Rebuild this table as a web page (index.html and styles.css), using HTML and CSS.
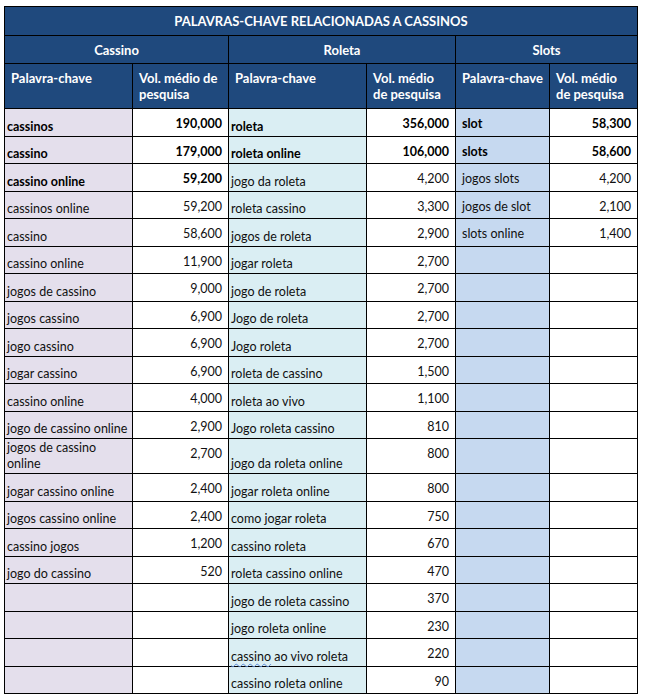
FILE: index.html
```html
<!DOCTYPE html>
<html lang="pt">
<head>
<meta charset="utf-8">
<title>Palavras-chave relacionadas a cassinos</title>
<link rel="stylesheet" href="styles.css">
</head>
<body>
<div class="wrap">
<table class="sheet">
<colgroup>
<col class="c1"><col class="c2"><col class="c3"><col class="c4"><col class="c5"><col class="c6">
</colgroup>
<thead>
<tr class="r-title"><th colspan="6">PALAVRAS-CHAVE RELACIONADAS A CASSINOS</th></tr>
<tr class="r-group"><th colspan="2">Cassino</th><th colspan="2">Roleta</th><th colspan="2">Slots</th></tr>
<tr class="r-sub">
<th>Palavra-chave</th><th>Vol. médio de pesquisa</th>
<th>Palavra-chave</th><th>Vol. médio de pesquisa</th>
<th>Palavra-chave</th><th>Vol. médio de pesquisa</th>
</tr>
</thead>
<tbody>
<tr><td class="kc b">cassinos</td><td class="num b">190,000</td><td class="kr b">roleta</td><td class="num b">356,000</td><td class="ks b">slot</td><td class="num b">58,300</td></tr>
<tr><td class="kc b">cassino</td><td class="num b">179,000</td><td class="kr b">roleta online</td><td class="num b">106,000</td><td class="ks b">slots</td><td class="num b">58,600</td></tr>
<tr><td class="kc b">cassino online</td><td class="num b">59,200</td><td class="kr">jogo da roleta</td><td class="num">4,200</td><td class="ks">jogos slots</td><td class="num">4,200</td></tr>
<tr><td class="kc">cassinos online</td><td class="num">59,200</td><td class="kr">roleta cassino</td><td class="num">3,300</td><td class="ks">jogos de slot</td><td class="num">2,100</td></tr>
<tr><td class="kc">cassino</td><td class="num">58,600</td><td class="kr">jogos de roleta</td><td class="num">2,900</td><td class="ks">slots online</td><td class="num">1,400</td></tr>
<tr><td class="kc">cassino online</td><td class="num">11,900</td><td class="kr">jogar roleta</td><td class="num">2,700</td><td class="ks"></td><td class="num"></td></tr>
<tr><td class="kc">jogos de cassino</td><td class="num">9,000</td><td class="kr">jogo de roleta</td><td class="num">2,700</td><td class="ks"></td><td class="num"></td></tr>
<tr><td class="kc">jogos cassino</td><td class="num">6,900</td><td class="kr">Jogo de roleta</td><td class="num">2,700</td><td class="ks"></td><td class="num"></td></tr>
<tr><td class="kc">jogo cassino</td><td class="num">6,900</td><td class="kr">Jogo roleta</td><td class="num">2,700</td><td class="ks"></td><td class="num"></td></tr>
<tr><td class="kc">jogar cassino</td><td class="num">6,900</td><td class="kr">roleta de cassino</td><td class="num">1,500</td><td class="ks"></td><td class="num"></td></tr>
<tr><td class="kc">cassino online</td><td class="num">4,000</td><td class="kr">roleta ao vivo</td><td class="num">1,100</td><td class="ks"></td><td class="num"></td></tr>
<tr><td class="kc nowrap">jogo de cassino online</td><td class="num">2,900</td><td class="kr">Jogo roleta cassino</td><td class="num">810</td><td class="ks"></td><td class="num"></td></tr>
<tr class="tall"><td class="kc">jogos de cassino online</td><td class="num">2,700</td><td class="kr">jogo da roleta online</td><td class="num">800</td><td class="ks"></td><td class="num"></td></tr>
<tr><td class="kc">jogar cassino online</td><td class="num">2,400</td><td class="kr">jogar roleta online</td><td class="num">800</td><td class="ks"></td><td class="num"></td></tr>
<tr><td class="kc">jogos cassino online</td><td class="num">2,400</td><td class="kr">como jogar roleta</td><td class="num">750</td><td class="ks"></td><td class="num"></td></tr>
<tr><td class="kc">cassino jogos</td><td class="num">1,200</td><td class="kr">cassino roleta</td><td class="num">670</td><td class="ks"></td><td class="num"></td></tr>
<tr><td class="kc">jogo do cassino</td><td class="num">520</td><td class="kr">roleta cassino online</td><td class="num">470</td><td class="ks"></td><td class="num"></td></tr>
<tr><td class="kc"></td><td class="num"></td><td class="kr">jogo de roleta cassino</td><td class="num">370</td><td class="ks"></td><td class="num"></td></tr>
<tr><td class="kc"></td><td class="num"></td><td class="kr">jogo roleta online</td><td class="num">230</td><td class="ks"></td><td class="num"></td></tr>
<tr><td class="kc"></td><td class="num"></td><td class="kr"><span class="spell">cassino</span> ao vivo roleta</td><td class="num">220</td><td class="ks"></td><td class="num"></td></tr>
<tr><td class="kc"></td><td class="num"></td><td class="kr">cassino roleta online</td><td class="num">90</td><td class="ks"></td><td class="num"></td></tr>
</tbody>
</table>
</div>
</body>
</html>
```
FILE: styles.css
```css
html, body {
  margin: 0;
  padding: 0;
  background: #ffffff;
}

.wrap {
  padding: 6px 0 0 4px;
}

.sheet {
  border-collapse: collapse;
  table-layout: fixed;
  width: 634px;
  font-family: Lato, "Liberation Sans", sans-serif;
  font-size: 12.5px;
  color: #111111;
}

.c1 { width: 128px; }
.c2 { width: 96px; }
.c3 { width: 138px; }
.c4 { width: 89px; }
.c5 { width: 94px; }
.c6 { width: 88px; }

.sheet th,
.sheet td {
  border: 1px solid #000;
  padding: 0;
  line-height: 16px;
}

.sheet th {
  background: #1f497d;
  color: #ffffff;
  font-weight: 700;
  font-size: 13px;
}

.sheet .r-title { height: 29px; }
.sheet .r-title th { text-align: center; vertical-align: middle; }

.sheet .r-group { height: 28px; }
.sheet .r-group th { text-align: center; vertical-align: middle; }

.sheet .r-sub { height: 45px; }
.sheet .r-sub th {
  text-align: left;
  vertical-align: top;
  padding: 6px 6px 0 6px;
}

.sheet tbody tr { height: 27.5px; }
.sheet tbody tr.tall { height: 35px; }

.sheet td.kc {
  background: #e4dfec;
  vertical-align: bottom;
  padding: 0 5px 1px 2px;
}

.sheet td.nowrap {
  white-space: nowrap;
}

.sheet td.kr {
  background: #daeef3;
  vertical-align: bottom;
  padding: 0 2px 1px 2px;
}

.sheet td.ks {
  background: #c6d9f0;
  vertical-align: top;
  padding: 7px 6px 0 6px;
}

.sheet td.num {
  background: #ffffff;
  text-align: right;
  vertical-align: top;
  padding: 7px 6px 0 0;
}

.sheet td.b {
  font-weight: 700;
  color: #000;
}

.spell {
  text-decoration: underline wavy #5b8ad6;
  text-decoration-thickness: 1px;
  text-underline-offset: 2px;
}
```
